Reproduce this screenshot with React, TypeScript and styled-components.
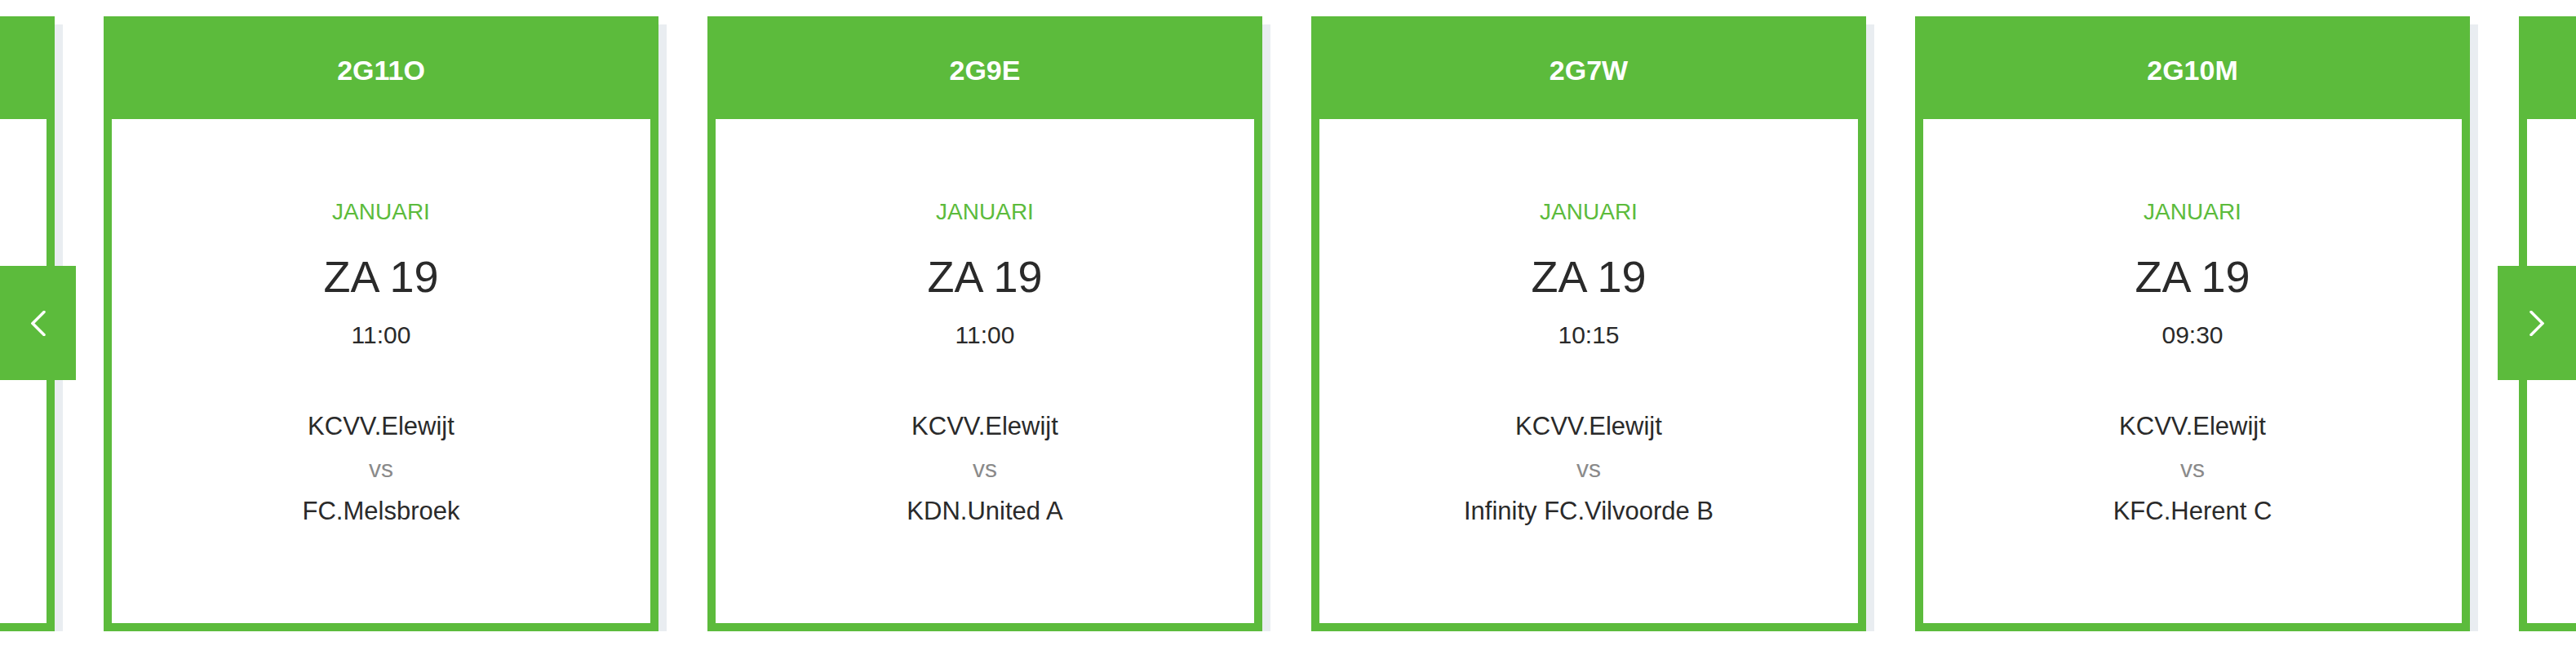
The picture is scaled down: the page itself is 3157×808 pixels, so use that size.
import React from "react";
import styled, { createGlobalStyle } from "styled-components";

const GREEN = "#5cbb3c";

const Global = createGlobalStyle`
  html, body { margin: 0; padding: 0; background: #ffffff; }
  body { font-family: "Liberation Sans", Arial, Helvetica, sans-serif; }
`;

const Viewport = styled.div`
  position: relative;
  width: 3157px;
  height: 808px;
  overflow: hidden;
  background: #ffffff;
`;

const Track = styled.div`
  display: flex;
  gap: 60px;
  padding-top: 20px;
  margin-left: -613px;
`;

const Card = styled.div`
  flex: 0 0 680px;
  height: 754px;
  box-sizing: border-box;
  background: ${GREEN};
  padding: 0 10px 10px;
  display: flex;
  flex-direction: column;
  box-shadow: 15px 5px 0 -5px #e9edf1;
`;

const Header = styled.div`
  height: 126px;
  flex: 0 0 126px;
  display: flex;
  align-items: center;
  justify-content: center;
  color: #ffffff;
  font-size: 34px;
  font-weight: 700;
  padding-top: 6px;
  box-sizing: border-box;
`;

const Body = styled.div`
  flex: 1;
  background: #ffffff;
  display: flex;
  flex-direction: column;
  align-items: center;
  text-align: center;
  padding-top: 97px;
  box-sizing: border-box;
  color: #2a2a2a;
`;

const Month = styled.div`
  color: ${GREEN};
  font-size: 28px;
  line-height: 34px;
  text-transform: uppercase;
`;

const Day = styled.div`
  font-size: 54px;
  line-height: 60px;
  margin-top: 32px;
`;

const Time = styled.div`
  font-size: 30px;
  line-height: 40px;
  margin-top: 22px;
`;

const Teams = styled.div`
  margin-top: 66px;
  display: flex;
  flex-direction: column;
  align-items: center;
`;

const Team = styled.div`
  font-size: 31px;
  line-height: 52px;
`;

const Versus = styled.div`
  font-size: 30px;
  line-height: 52px;
  color: #8a8a8a;
`;

const NavButton = styled.button<{ $side: "left" | "right" }>`
  position: absolute;
  top: 326px;
  ${(p) => (p.$side === "left" ? "left: 0; width: 93px;" : "right: 0; width: 96px;")}
  height: 140px;
  border: none;
  padding: 0;
  margin: 0;
  background: ${GREEN};
  display: flex;
  align-items: center;
  justify-content: center;
  cursor: pointer;
`;

type Match = {
  code: string;
  month: string;
  day: string;
  time: string;
  home: string;
  away: string;
};

const matches: Match[] = [
  { code: "2G11O", month: "Januari", day: "ZA 19", time: "11:00", home: "KCVV.Elewijt", away: "FC.Melsbroek" },
  { code: "2G9E", month: "Januari", day: "ZA 19", time: "11:00", home: "KCVV.Elewijt", away: "KDN.United A" },
  { code: "2G7W", month: "Januari", day: "ZA 19", time: "10:15", home: "KCVV.Elewijt", away: "Infinity FC.Vilvoorde B" },
  { code: "2G10M", month: "Januari", day: "ZA 19", time: "09:30", home: "KCVV.Elewijt", away: "KFC.Herent C" },
];

const Chevron = ({ dir }: { dir: "left" | "right" }) => (
  <svg width="18" height="31" viewBox="0 0 18 31" fill="none">
    <polyline
      points={dir === "left" ? "16,1.5 2,15.5 16,29.5" : "2,1.5 16,15.5 2,29.5"}
      stroke="#ffffff"
      strokeWidth="3.5"
      strokeLinecap="round"
      strokeLinejoin="miter"
    />
  </svg>
);

const PartialCard = () => (
  <Card aria-hidden="true">
    <Header />
    <Body />
  </Card>
);

export default function App() {
  return (
    <>
      <Global />
      <Viewport>
        <Track>
          <PartialCard />
          {matches.map((m) => (
            <Card key={m.code}>
              <Header>{m.code}</Header>
              <Body>
                <Month>{m.month}</Month>
                <Day>{m.day}</Day>
                <Time>{m.time}</Time>
                <Teams>
                  <Team>{m.home}</Team>
                  <Versus>vs</Versus>
                  <Team>{m.away}</Team>
                </Teams>
              </Body>
            </Card>
          ))}
          <PartialCard />
        </Track>
        <NavButton $side="left" aria-label="Vorige">
          <Chevron dir="left" />
        </NavButton>
        <NavButton $side="right" aria-label="Volgende">
          <Chevron dir="right" />
        </NavButton>
      </Viewport>
    </>
  );
}
